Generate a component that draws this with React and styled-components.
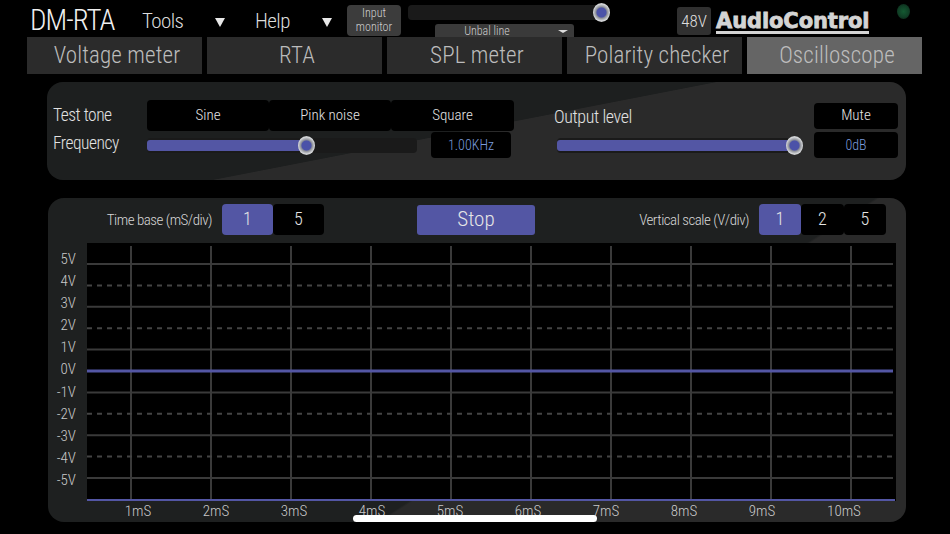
import React from "react";
import styled, { createGlobalStyle } from "styled-components";

const GlobalStyle = createGlobalStyle`
  html, body {
    margin: 0;
    padding: 0;
    background: #000;
  }
  * {
    box-sizing: border-box;
  }
  button {
    font-family: inherit;
    font-stretch: inherit;
    font-weight: inherit;
  }
`;

const BLUE = "#5356a4";

const Page = styled.div`
  position: relative;
  width: 950px;
  height: 534px;
  overflow: hidden;
  background: #000;
  color: #e6e6e6;
  font-family: Roboto, "Liberation Sans", sans-serif;
  font-stretch: 75%;
  font-weight: 300;
`;

const TopBar = styled.div`
  display: flex;
  align-items: flex-start;
  height: 37px;
  padding-left: 30px;
`;

const Title = styled.div`
  width: 112px;
  height: 37px;
  font-size: 29px;
  line-height: 41px;
  letter-spacing: -1px;
  color: #f0f0f0;
`;

const Menu = styled.div`
  display: flex;
  align-items: center;
  justify-content: space-between;
  width: ${(p) => p.$width}px;
  height: 37px;
  margin-right: ${(p) => p.$after}px;
  padding-top: 5px;
  font-size: 21px;
  letter-spacing: -0.6px;
  color: #ddd;
`;

const Triangle = styled.span`
  width: 0;
  height: 0;
  margin-top: 2px;
  border-left: 5px solid transparent;
  border-right: 5px solid transparent;
  border-top: 9px solid #e8e8e8;
`;

const InputMonitor = styled.button`
  width: 54px;
  height: 31px;
  margin-top: 5px;
  padding: 0 0 1px;
  border: none;
  border-radius: 4px;
  background: #3c3c3c;
  color: #d0d0d0;
  font-size: 12px;
  line-height: 14px;
`;

const MonitorBlock = styled.div`
  display: flex;
  flex-direction: column;
  width: 193px;
  margin-left: 7px;
  padding-top: 5px;
`;

const LineSelect = styled.div`
  position: relative;
  width: 139px;
  height: 13px;
  margin: 4px 0 0 27px;
  padding-right: 35px;
  border-radius: 3px 3px 0 0;
  background: #3a3a3a;
  color: #ccc;
  font-size: 12px;
  line-height: 14px;
  text-align: center;

  &::after {
    content: "";
    position: absolute;
    right: 6px;
    top: 6px;
    border-left: 5px solid transparent;
    border-right: 5px solid transparent;
    border-top: 3px solid #ddd;
  }
`;

const PhantomButton = styled.button`
  width: 34px;
  height: 28px;
  margin: 7px 0 0 76px;
  padding: 0;
  border: none;
  border-radius: 3px;
  background: #303030;
  color: #ddd;
  font-size: 17px;
`;

const Logo = styled.div`
  width: 153px;
  height: 23px;
  margin: 11px 0 0 5px;
  border-bottom: 3px solid #d4d4d4;
  font-family: "DejaVu Sans", sans-serif;
  font-stretch: normal;
  font-size: 21px;
  font-weight: 700;
  line-height: 20px;
  letter-spacing: -0.1px;
  white-space: nowrap;
  color: #d4d4d4;
  -webkit-text-stroke: 0.8px #d4d4d4;
`;

const Led = styled.span`
  width: 13px;
  height: 15px;
  margin: 4px 0 0 28px;
  border-radius: 50%;
  background: radial-gradient(circle, #145a32 0%, #103f26 55%, #091c12 100%);
`;

const Tabs = styled.nav`
  display: flex;
  gap: 5px;
  height: 37px;
  padding-left: 27px;
`;

const Tab = styled.div`
  display: flex;
  align-items: center;
  justify-content: center;
  width: 175px;
  padding-left: 5px;
  background: ${(p) => (p.$active ? "#656565" : "#2b2b2b")};
  color: ${(p) => (p.$active ? "#bdbdbd" : "#bcbcbc")};
  font-size: 23px;
  letter-spacing: 0.15px;
`;

const TonePanel = styled.section`
  display: flex;
  align-items: flex-start;
  width: 859px;
  height: 98px;
  margin: 8px 0 0 47px;
  padding: 18px 8px 0 6px;
  border-radius: 16px;
  background: linear-gradient(169deg, #1d1f1f 0%, #1d1f1f 49%, #2a2a2a 49.3%, #2a2a2a 100%);
`;

const ToneBlock = styled.div`
  display: flex;
  flex-direction: column;
  gap: 1px;
  width: 461px;
`;

const OutputBlock = styled.div`
  display: flex;
  flex-direction: column;
  gap: 3px;
  width: 344px;
  margin: 3px 0 0 40px;
`;

const Row = styled.div`
  display: flex;
  align-items: center;
  justify-content: ${(p) => (p.$spread ? "space-between" : "flex-start")};
`;

const RowLabel = styled.span`
  width: 94px;
  margin-top: ${(p) => p.$lift || 0}px;
  font-size: 17.5px;
  letter-spacing: -0.5px;
  color: #e2e2e2;
`;

const OutputLabel = styled.span`
  font-size: 18px;
  letter-spacing: -0.4px;
  color: #e2e2e2;
`;

const SegmentGroup = styled.div`
  display: flex;
`;

const Segment = styled.button`
  width: ${(p) => p.$width}px;
  height: ${(p) => p.$height}px;
  padding: 0 0 2px;
  border: none;
  border-radius: 4px;
  background: ${(p) => (p.$on ? BLUE : "#000")};
  color: #e4e4e4;
  font-size: ${(p) => p.$size || 15}px;
`;

const Track = styled.div`
  position: relative;
  width: ${(p) => p.$width}px;
  height: 15px;
  margin-left: ${(p) => p.$left || 0}px;
  padding-top: 2px;
  border-radius: 4px;
  background: #1a1a1a;
`;

const Fill = styled.div`
  height: 11px;
  border-radius: 3px;
  background: ${BLUE};
`;

const Knob = styled.span`
  position: absolute;
  top: -2px;
  width: 17px;
  height: 19px;
  margin-left: -8.5px;
  border-radius: 50%;
  background: radial-gradient(circle, #4b52a8 0%, #4b52a8 36%, #8a8d96 44%, #d6d8da 66%, #9a9a9a 100%);
`;

const ValueBox = styled.div`
  display: flex;
  align-items: center;
  justify-content: center;
  width: ${(p) => p.$width}px;
  height: 26px;
  margin-left: ${(p) => p.$left || 0}px;
  padding-bottom: 1px;
  border-radius: 4px;
  background: #000;
  color: #7a9adc;
  font-size: 14px;
`;

const ScopePanel = styled.section`
  width: 858px;
  height: 324px;
  margin: 18px 0 0 48px;
  padding-top: 6px;
  border-radius: 16px;
  background: linear-gradient(147deg, #1e2020 0%, #1e2020 61%, #2a2a2a 61.3%, #2a2a2a 100%);
`;

const ScopeControls = styled.div`
  display: flex;
  align-items: center;
  height: 31px;
`;

const ScaleLabel = styled.span`
  width: ${(p) => p.$width}px;
  margin-right: 10px;
  font-size: 15px;
  letter-spacing: -0.5px;
  text-align: right;
  white-space: nowrap;
  color: #d6d6d6;
`;

const StopButton = styled.button`
  width: 118px;
  height: 30px;
  margin: 0 92px 0 93px;
  padding: 0 0 2px;
  border: none;
  border-radius: 3px;
  background: ${BLUE};
  color: #e6e6e6;
  font-size: 21px;
`;

const ChartGrid = styled.div`
  display: grid;
  grid-template-columns: 39px 809px;
  grid-template-rows: 258px 21px;
  margin-top: 8px;
`;

const YAxis = styled.div`
  display: flex;
  flex-direction: column;
  padding: 5px 11px 0 0;
`;

const YTick = styled.span`
  height: 22.1px;
  font-size: 15px;
  line-height: 22px;
  text-align: right;
  color: #c9c9c9;
`;

const Plot = styled.svg`
  display: block;
  background: #000;
`;

const XAxis = styled.div`
  grid-column: 2;
  display: flex;
  padding-left: 12px;
`;

const XTick = styled.span`
  width: 78px;
  font-size: 15px;
  line-height: 20px;
  text-align: center;
  color: #c9c9c9;

  &:last-child {
    margin-left: 4px;
  }
`;

const HomeBar = styled.div`
  position: absolute;
  left: 353px;
  top: 515px;
  width: 244px;
  height: 7px;
  border-radius: 4px;
  background: #fff;
`;

const TABS = ["Voltage meter", "RTA", "SPL meter", "Polarity checker", "Oscilloscope"];
const Y_TICKS = ["5V", "4V", "3V", "2V", "1V", "0V", "-1V", "-2V", "-3V", "-4V", "-5V"];
const X_TICKS = ["1mS", "2mS", "3mS", "4mS", "5mS", "6mS", "7mS", "8mS", "9mS", "10mS"];
const DASHED = [1, 3, 7, 9];

const App = () => {
  return (
    <Page>
      <GlobalStyle />
      <TopBar>
        <Title>DM-RTA</Title>
        <Menu $width={83} $after={30}>
          Tools <Triangle />
        </Menu>
        <Menu $width={77} $after={15}>
          Help <Triangle />
        </Menu>
        <InputMonitor>
          Input
          <br />
          monitor
        </InputMonitor>
        <MonitorBlock>
          <Track $width={193}>
            <Knob style={{ left: "100%" }} />
          </Track>
          <LineSelect>Unbal line</LineSelect>
        </MonitorBlock>
        <PhantomButton>48V</PhantomButton>
        <Logo>AudioControl</Logo>
        <Led />
      </TopBar>

      <Tabs>
        {TABS.map((name) => (
          <Tab key={name} $active={name === "Oscilloscope"}>
            {name}
          </Tab>
        ))}
      </Tabs>

      <TonePanel>
        <ToneBlock>
          <Row>
            <RowLabel $lift={-2}>Test tone</RowLabel>
            <SegmentGroup>
              <Segment $width={122} $height={31}>Sine</Segment>
              <Segment $width={122} $height={31}>Pink noise</Segment>
              <Segment $width={123} $height={31}>Square</Segment>
            </SegmentGroup>
          </Row>
          <Row>
            <RowLabel $lift={-4}>Frequency</RowLabel>
            <Track $width={270}>
              <Fill style={{ width: "59%" }} />
              <Knob style={{ left: "59%" }} />
            </Track>
            <ValueBox $width={80} $left={14}>1.00KHz</ValueBox>
          </Row>
        </ToneBlock>
        <OutputBlock>
          <Row $spread>
            <OutputLabel>Output level</OutputLabel>
            <Segment $width={84} $height={26}>Mute</Segment>
          </Row>
          <Row $spread>
            <Track $width={238} $left={3}>
              <Fill style={{ width: "100%" }} />
              <Knob style={{ left: "99.6%" }} />
            </Track>
            <ValueBox $width={84}>0dB</ValueBox>
          </Row>
        </OutputBlock>
      </TonePanel>

      <ScopePanel>
        <ScopeControls>
          <ScaleLabel $width={164}>Time base (mS/div)</ScaleLabel>
          <SegmentGroup>
            <Segment $width={51} $height={31} $on $size={18}>1</Segment>
            <Segment $width={51} $height={31} $size={18}>5</Segment>
          </SegmentGroup>
          <StopButton>Stop</StopButton>
          <ScaleLabel $width={122}>Vertical scale (V/div)</ScaleLabel>
          <SegmentGroup>
            <Segment $width={42} $height={31} $on $size={18}>1</Segment>
            <Segment $width={43} $height={31} $size={18}>2</Segment>
            <Segment $width={42} $height={31} $size={18}>5</Segment>
          </SegmentGroup>
        </ScopeControls>

        <ChartGrid>
          <YAxis>
            {Y_TICKS.map((t) => (
              <YTick key={t}>{t}</YTick>
            ))}
          </YAxis>
          <Plot width="809" height="258" viewBox="0 0 809 258">
            {X_TICKS.map((t, i) => (
              <line key={t} x1={44 + i * 80} x2={44 + i * 80} y1="3" y2="256" stroke="#3a3a3a" strokeWidth="2" />
            ))}
            {Y_TICKS.map((t, i) =>
              i === 5 ? null : (
                <line
                  key={t}
                  x1="0"
                  x2="806"
                  y1={21 + i * 21.4}
                  y2={21 + i * 21.4}
                  stroke={DASHED.includes(i) ? "#444" : "#3a3a3a"}
                  strokeWidth="2"
                  strokeDasharray={DASHED.includes(i) ? "5 5" : undefined}
                />
              )
            )}
            <line x1="0" x2="806" y1="128" y2="128" stroke={BLUE} strokeWidth="3" />
            <line x1="0" x2="808" y1="257" y2="257" stroke={BLUE} strokeWidth="2" />
          </Plot>
          <XAxis>
            {X_TICKS.map((t) => (
              <XTick key={t}>{t}</XTick>
            ))}
          </XAxis>
        </ChartGrid>
      </ScopePanel>

      <HomeBar />
    </Page>
  );
};

export default App;
